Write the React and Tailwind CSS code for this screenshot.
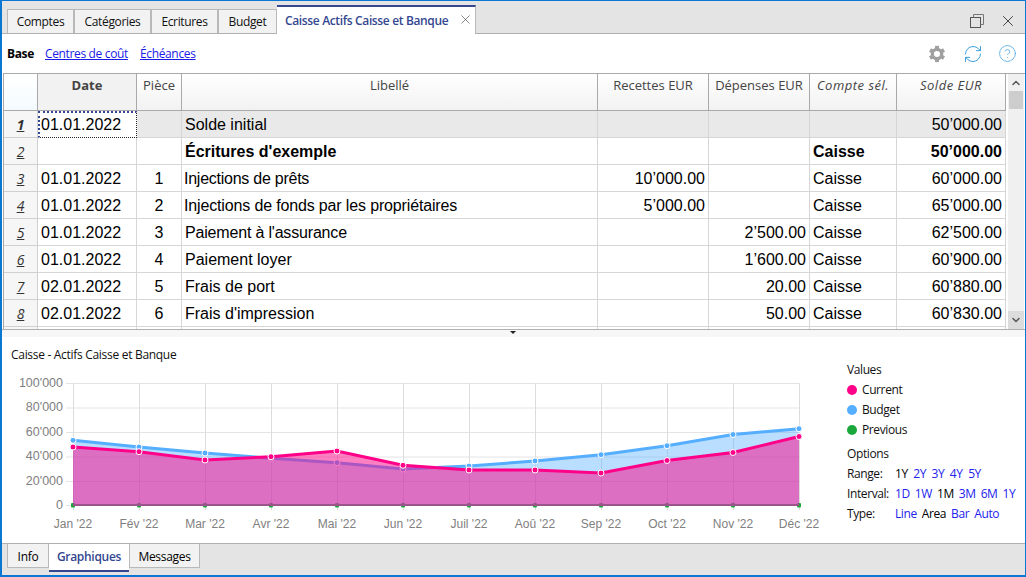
import React from "react";
import { RefreshCw, CircleHelp, X, ChevronUp, ChevronDown } from "lucide-react";

const ui = "font-['Open_Sans','Noto_Sans',sans-serif]";
const cols = "grid grid-cols-[34px_99px_45px_416px_111px_101px_87px_109px]";

const rows = [
  ["1", "01.01.2022", "", "Solde initial", "", "", "", "50’000.00"],
  ["2", "", "", "Écritures d'exemple", "", "", "Caisse", "50’000.00"],
  ["3", "01.01.2022", "1", "Injections de prêts", "10’000.00", "", "Caisse", "60’000.00"],
  ["4", "01.01.2022", "2", "Injections de fonds par les propriétaires", "5’000.00", "", "Caisse", "65’000.00"],
  ["5", "01.01.2022", "3", "Paiement à l'assurance", "", "2’500.00", "Caisse", "62’500.00"],
  ["6", "01.01.2022", "4", "Paiement loyer", "", "1’600.00", "Caisse", "60’900.00"],
  ["7", "02.01.2022", "5", "Frais de port", "", "20.00", "Caisse", "60’880.00"],
  ["8", "02.01.2022", "6", "Frais d'impression", "", "50.00", "Caisse", "60’830.00"],
];
const labelTrack = { 2: "tracking-[-0.25px] pl-[2px]", 3: "tracking-[-0.15px] pl-[2px]", 4: "tracking-[-0.18px] pl-[3px]" };

function Tab({ children, w }) {
  return (
    <div className={`${w} h-[24px] flex items-center justify-center bg-[#f2f2f2] border-x border-t border-[#b9b9b9] text-[12px] tracking-[-0.35px] text-[#111]`}>
      {children}
    </div>
  );
}

function HeaderCell({ children, className = "" }) {
  return (
    <div className={`h-[37px] pt-[2px] text-center text-[13px] leading-[18px] text-[#444] border-r border-[#a9a9a9] border-b border-b-[#a9a9a9] bg-gradient-to-b from-white to-[#f2f2f2] ${className}`}>
      {children}
    </div>
  );
}

function Row({ r, i }) {
  const first = i === 0;
  const bold = i === 1;
  const bg = first ? "bg-[#e9e9e9]" : "bg-white";
  const cell = `h-[27px] text-[16px] border-r border-b border-[#d6d6d6] text-black whitespace-nowrap overflow-hidden ${bg}`;
  return (
    <div className={cols}>
      <div className={`h-[27px] flex items-center justify-center text-[14px] italic underline text-[#333] border-r border-b border-[#d0d0d0] bg-[#f6f6f6] ${ui} ${first ? "font-bold" : ""}`}>
        {r[0]}
      </div>
      <div className={`${cell} ${first ? "pl-[1px] !bg-white border border-dotted !border-[#222] border-l-2 !border-l-[#34478f] border-t-2 !border-t-[#34478f] leading-[23px]" : "pl-[3px] leading-[28px]"}`}>{r[1]}</div>
      <div className={`${cell} leading-[28px] text-center`}>{r[2]}</div>
      <div className={`${cell} leading-[28px] ${labelTrack[i] || "pl-[3px]"} ${bold ? "font-bold" : ""}`}>{r[3]}</div>
      <div className={`${cell} leading-[28px] text-right pr-[3px]`}>{r[4]}</div>
      <div className={`${cell} leading-[28px] text-right pr-[3px]`}>{r[5]}</div>
      <div className={`${cell} leading-[28px] pl-[3px] ${bold ? "font-bold" : ""}`}>{r[6]}</div>
      <div className={`${cell} leading-[28px] text-right pr-[3px] ${bold ? "font-bold" : ""}`}>{r[7]}</div>
    </div>
  );
}

const xs = Array.from({ length: 12 }, (_, i) => 71 + 66 * i);
const months = ["Jan '22", "Fév '22", "Mar '22", "Avr '22", "Mai '22", "Jun '22", "Juil '22", "Aoû '22", "Sep '22", "Oct '22", "Nov '22", "Déc '22"];
const current = [447, 451.7, 460, 456.7, 451, 465.3, 470, 470, 473, 460.5, 452.5, 436.5];
const budget = [440.3, 447, 453, 458.3, 462.7, 469, 466, 461, 454.7, 445.7, 434.5, 428.7];
const TOP = 337;
const Y0 = 505 - TOP;
const line = (a) => a.map((y, i) => `${xs[i]},${y - TOP}`).join(" ");
const area = (a) => `${xs[0]},${Y0 + 1} ${line(a)} ${xs[11]},${Y0 + 1}`;

function Chart() {
  const ticks = [["100'000", 383], ["80'000", 407.5], ["60'000", 432], ["40'000", 456.5], ["20'000", 481], ["0", 505]];
  return (
    <svg width="828" height="206" className="block shrink-0" fontFamily="Liberation Sans, sans-serif">
      {ticks.map(([t, y]) => (
        <g key={t}>
          <line x1="64" x2="797" y1={y - TOP + 0.5} y2={y - TOP + 0.5} stroke="#e4e4e4" strokeWidth="1" />
          <text x="61" y={y - TOP + 3.5} textAnchor="end" fontSize="12.5" fill="#808080">{t}</text>
        </g>
      ))}
      {xs.map((x, i) => (
        <g key={x}>
          <line x1={x + 0.5} x2={x + 0.5} y1="46" y2={Y0 + 5} stroke="#dcdcdc" />
          <text x={x} y={Y0 + 23} textAnchor="middle" fontSize="12" fill="#808080">{months[i]}</text>
        </g>
      ))}
      <line x1={xs[0]} x2={xs[11]} y1={Y0} y2={Y0} stroke="#1aa83c" strokeWidth="2" />
      {xs.map((x) => (
        <rect key={x} x={x - 2} y={Y0 - 2} width="4" height="4.5" rx="1" fill="#1aa83c" />
      ))}
      <polygon points={area(budget)} fill="#5ab0ff" fillOpacity="0.42" />
      <polyline points={line(budget)} fill="none" stroke="#55aeff" strokeWidth="3" />
      {budget.map((y, i) => (
        <circle key={i} cx={xs[i]} cy={y - TOP} r="3" fill="#55aeff" stroke="#fff" strokeWidth="1" />
      ))}
      <polygon points={area(current)} fill="#ff0088" fillOpacity="0.5" />
      <polyline points={line(current)} fill="none" stroke="#ff0088" strokeWidth="3" />
      {current.map((y, i) => (
        <circle key={i} cx={xs[i]} cy={y - TOP} r="3" fill="#ff0088" stroke="#fff" strokeWidth="1" />
      ))}
    </svg>
  );
}

function Dot({ color, children }) {
  return (
    <div className="h-[20px] flex items-center">
      <span className={`w-[10px] h-[10px] rounded-full mr-[5px] ${color}`} />
      {children}
    </div>
  );
}

function OptRow({ label, items, gap }) {
  return (
    <div className="h-[20px] flex items-center">
      <span className="w-[48px] shrink-0">{label}</span>
      <div className={`flex ${gap}`}>
        {items.map(([t, on], i) => (
          <span key={i} className={on ? "text-black" : "text-[#2222ee]"}>{t}</span>
        ))}
      </div>
    </div>
  );
}

function Gear() {
  return (
    <svg width="18" height="18" viewBox="0 0 20 20">
      <circle cx="10" cy="10" r="5.2" fill="none" stroke="#a0a0a0" strokeWidth="3.6" />
      {[0, 60, 120, 180, 240, 300].map((a) => (
        <rect key={a} x="7.8" y="1" width="4.4" height="3.8" fill="#a0a0a0" transform={`rotate(${a} 10 10)`} />
      ))}
    </svg>
  );
}

export default function App() {
  return (
    <div className={`w-[1026px] h-[577px] flex flex-col bg-white border border-l-2 border-b-2 border-[#0a78d2] overflow-hidden ${ui}`}>
      {/* Top tabs */}
      <div className="h-[33px] shrink-0 flex items-end pl-[5px] bg-[#e4e4e4] border-b border-[#b0b0b0]">
        <Tab w="w-[67px]">Comptes</Tab>
        <Tab w="w-[77px]">Catégories</Tab>
        <Tab w="w-[67px]">Ecritures</Tab>
        <Tab w="w-[59px]">Budget</Tab>
        <div className="relative top-px w-[199px] h-[29px] shrink-0 flex items-center pl-[8px] gap-[10px] bg-white border-t-2 border-t-[#35478f] border-r border-[#b9b9b9] text-[12px] font-semibold tracking-[-0.35px] text-[#34478f]">
          <span className="whitespace-nowrap">Caisse Actifs Caisse et Banque</span>
          <X size={15} strokeWidth={1} className="shrink-0 text-[#444] -mt-[3px]" />
        </div>
        <div className="flex-1 flex items-center justify-end gap-[14px] pr-[8px] h-full pt-[8px]">
          <svg width="16" height="16" viewBox="0 0 16 16" fill="none" stroke="#555">
            <rect x="1.5" y="4.5" width="10" height="10" />
            <path d="M4.5 4.5V1.5H14.5V11.5H11.5" stroke="#777" />
          </svg>
          <X size={18} strokeWidth={1.2} className="text-[#333]" />
        </div>
      </div>

      {/* Sub navigation */}
      <div className="h-[39px] shrink-0 flex items-center pl-[5px] pr-[8px] text-[12px] tracking-[-0.35px]">
        <span className="font-bold text-black mr-[11px]">Base</span>
        <span className="text-[#1a1ae6] underline mr-[12px]">Centres de coût</span>
        <span className="text-[#1a1ae6] underline">Échéances</span>
        <div className="flex-1" />
        <div className="flex items-center gap-[15px]">
          <div className="mr-[2px] flex"><Gear /></div>
          <RefreshCw size={20} strokeWidth={1.2} className="text-[#3f9fdc]" />
          <CircleHelp size={19} strokeWidth={1} className="text-[#4aa5e0]" />
        </div>
      </div>

      {/* Table */}
      <div className="h-[256px] shrink-0 flex ml-px mr-0 border-t border-l border-[#a9a9a9] overflow-hidden">
        <div className="w-[1002px] shrink-0">
          <div className={cols}>
            <HeaderCell className="bg-gradient-to-b from-[#f8f8f8] to-[#f4fbff]"></HeaderCell>
            <HeaderCell className="!bg-none bg-[#f2f2f2] font-bold">Date</HeaderCell>
            <HeaderCell>Pièce</HeaderCell>
            <HeaderCell>Libellé</HeaderCell>
            <HeaderCell>Recettes EUR</HeaderCell>
            <HeaderCell>Dépenses EUR</HeaderCell>
            <HeaderCell className="italic tracking-[0.5px]">Compte sél.</HeaderCell>
            <HeaderCell className="italic tracking-[0.5px]">Solde EUR</HeaderCell>
          </div>
          <div className="font-['Liberation_Sans',Arial,sans-serif]">
            {rows.map((r, i) => <Row key={i} r={r} i={i} />)}
            <div className={cols}>
              <div className="h-[3px] border-r border-[#d0d0d0] bg-[#f6f6f6]" />
              <div className="h-[3px] border-r border-[#d6d6d6]" />
              <div className="h-[3px] border-r border-[#d6d6d6]" />
              <div className="h-[3px] border-r border-[#d6d6d6]" />
              <div className="h-[3px] border-r border-[#d6d6d6]" />
              <div className="h-[3px] border-r border-[#d6d6d6]" />
              <div className="h-[3px] border-r border-[#d6d6d6]" />
              <div className="h-[3px] border-r border-[#d6d6d6]" />
            </div>
          </div>
        </div>
        <div className="flex-1 flex flex-col bg-[#f0f0f0] ml-[2px] mr-px">
          <div className="h-[17px] flex items-center justify-center"><ChevronUp size={12} strokeWidth={3} className="text-[#555]" /></div>
          <div className="h-[18px] mx-px bg-[#cdcdcd]" />
          <div className="flex-1" />
          <div className="h-[18px] flex items-center justify-center bg-[#dcdcdc]"><ChevronDown size={12} strokeWidth={3} className="text-[#555]" /></div>
        </div>
      </div>

      {/* Splitter */}
      <div className="h-[8px] shrink-0 flex justify-center border-t border-[#b0b0b0] bg-[#f7f7f7]">
        <div className="mt-[1px] w-0 h-0 border-x-[3px] border-x-transparent border-t-[3px] border-t-[#222] -ml-[1px]" />
      </div>

      {/* Chart panel */}
      <div className="relative flex-1 min-h-0 flex">
        <div className="absolute left-[9px] top-[10px] text-[12px] leading-[16px] tracking-[-0.3px] text-[#111]">Caisse - Actifs Caisse et Banque</div>
        <Chart />
        <div className="pt-[23px] pl-[17px] text-[12px] leading-[16px] tracking-[-0.4px] text-[#111] whitespace-nowrap">
          <div className="h-[20px] flex items-center">Values</div>
          <Dot color="bg-[#ff0088]">Current</Dot>
          <Dot color="bg-[#55aeff]">Budget</Dot>
          <Dot color="bg-[#1aa83c]">Previous</Dot>
          <div className="h-[22px] mb-[2px] flex items-end">Options</div>
          <OptRow label="Range:" gap="gap-[5.5px]" items={[["1Y", 1], ["2Y"], ["3Y"], ["4Y"], ["5Y"]]} />
          <OptRow label="Interval:" gap="gap-[5px]" items={[["1D"], ["1W"], ["1M", 1], ["3M"], ["6M"], ["1Y"]]} />
          <OptRow label="Type:" gap="gap-[5px]" items={[["Line"], ["Area", 1], ["Bar"], ["Auto"]]} />
        </div>
      </div>

      {/* Bottom tabs */}
      <div className="h-[32px] shrink-0 flex items-start pl-[5px] bg-[#e4e4e4] border-t border-[#b0b0b0] text-[12px] tracking-[-0.3px]">
        <div className="w-[42px] h-[24px] pt-[2px] flex items-center justify-center bg-[#f2f2f2] border border-t-0 border-[#b9b9b9]">Info</div>
        <div className="w-[80px] h-[28px] flex items-center justify-center bg-white border-b-2 border-[#35478f] font-semibold text-[#34478f]">Graphiques</div>
        <div className="w-[71px] h-[24px] pt-[2px] flex items-center justify-center bg-[#f2f2f2] border border-t-0 border-[#b9b9b9]">Messages</div>
      </div>
    </div>
  );
}
